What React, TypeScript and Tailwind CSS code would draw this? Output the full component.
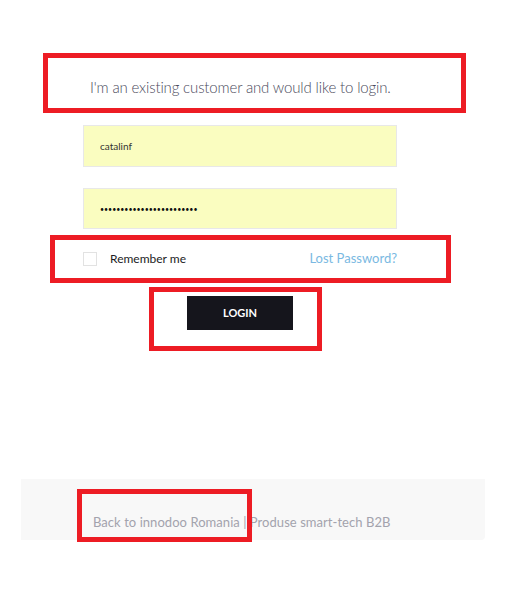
import { useState } from "react";

// red annotation frames laid over the login form
const frames = [
  { key: "heading", className: "left-[43px] top-[53px] w-[423px] h-[60px]" },
  { key: "remember", className: "left-[50px] top-[235px] w-[401px] h-[48px]" },
  { key: "login", className: "left-[149px] top-[287px] w-[173px] h-[64px]" },
  { key: "back", className: "left-[77px] top-[489px] w-[175px] h-[53px]" },
];

export default function App() {
  const [login, setLogin] = useState("catalinf");
  const [password, setPassword] = useState("mysecretpassword12345678");
  const [remember, setRemember] = useState(false);

  return (
    <div className="relative w-[515px] h-[596px] bg-white font-['Lato','Liberation_Sans',sans-serif]">
      {/* Heading */}
      <p className="pt-[77px] pl-[90px] text-[15px] leading-[20px] font-light text-[#4b4b5c] tracking-[-0.15px]">
        I'm an existing customer and would like to login.
      </p>

      {/* Form */}
      <form
        className="ml-[83px] w-[314px] flex flex-col"
        onSubmit={(e) => e.preventDefault()}
      >
        <input
          value={login}
          onChange={(e) => setLogin(e.target.value)}
          className="mt-[28px] h-[42px] px-[16px] bg-[#fafdc0] border border-[#e8e8e8] text-[10px] text-[#333] outline-none"
        />
        <input
          type="password"
          value={password}
          onChange={(e) => setPassword(e.target.value)}
          className="mt-[21px] h-[41px] px-[16px] bg-[#fafdc0] border border-[#e8e8e8] text-[7px] tracking-[0px] text-[#111] outline-none"
        />

        <div className="mt-[23px] h-[14px] flex items-center">
          <button
            type="button"
            onClick={() => setRemember(!remember)}
            className="w-[14px] h-[14px] border border-[#e2e2e2] bg-white"
          />
          <span className="ml-[13px] text-[12px] text-[#1c1c24]">Remember me</span>
          <a href="#" className="ml-auto text-[13px] text-[#7ab9e2]">
            Lost Password?
          </a>
        </div>

        <button
          type="submit"
          className="mt-[30px] self-center w-[106px] h-[34px] bg-[#15151c] text-white text-[11px] font-bold uppercase"
        >
          Login
        </button>
      </form>

      {/* Footer */}
      <div className="mt-[149px] ml-[21px] w-[464px] h-[61px] bg-[#f8f8f8] rounded-br-[4px] pl-[72px] pt-[30px]">
        <a href="#" className="text-[13px] leading-[18px] tracking-[0.05px] text-[#a3a3ad]">
          Back to innodoo Romania | Produse smart-tech B2B
        </a>
      </div>

      {frames.map((f) => (
        <div
          key={f.key}
          className={`absolute border-[5px] border-[#ed1c24] pointer-events-none ${f.className}`}
        />
      ))}
    </div>
  );
}
